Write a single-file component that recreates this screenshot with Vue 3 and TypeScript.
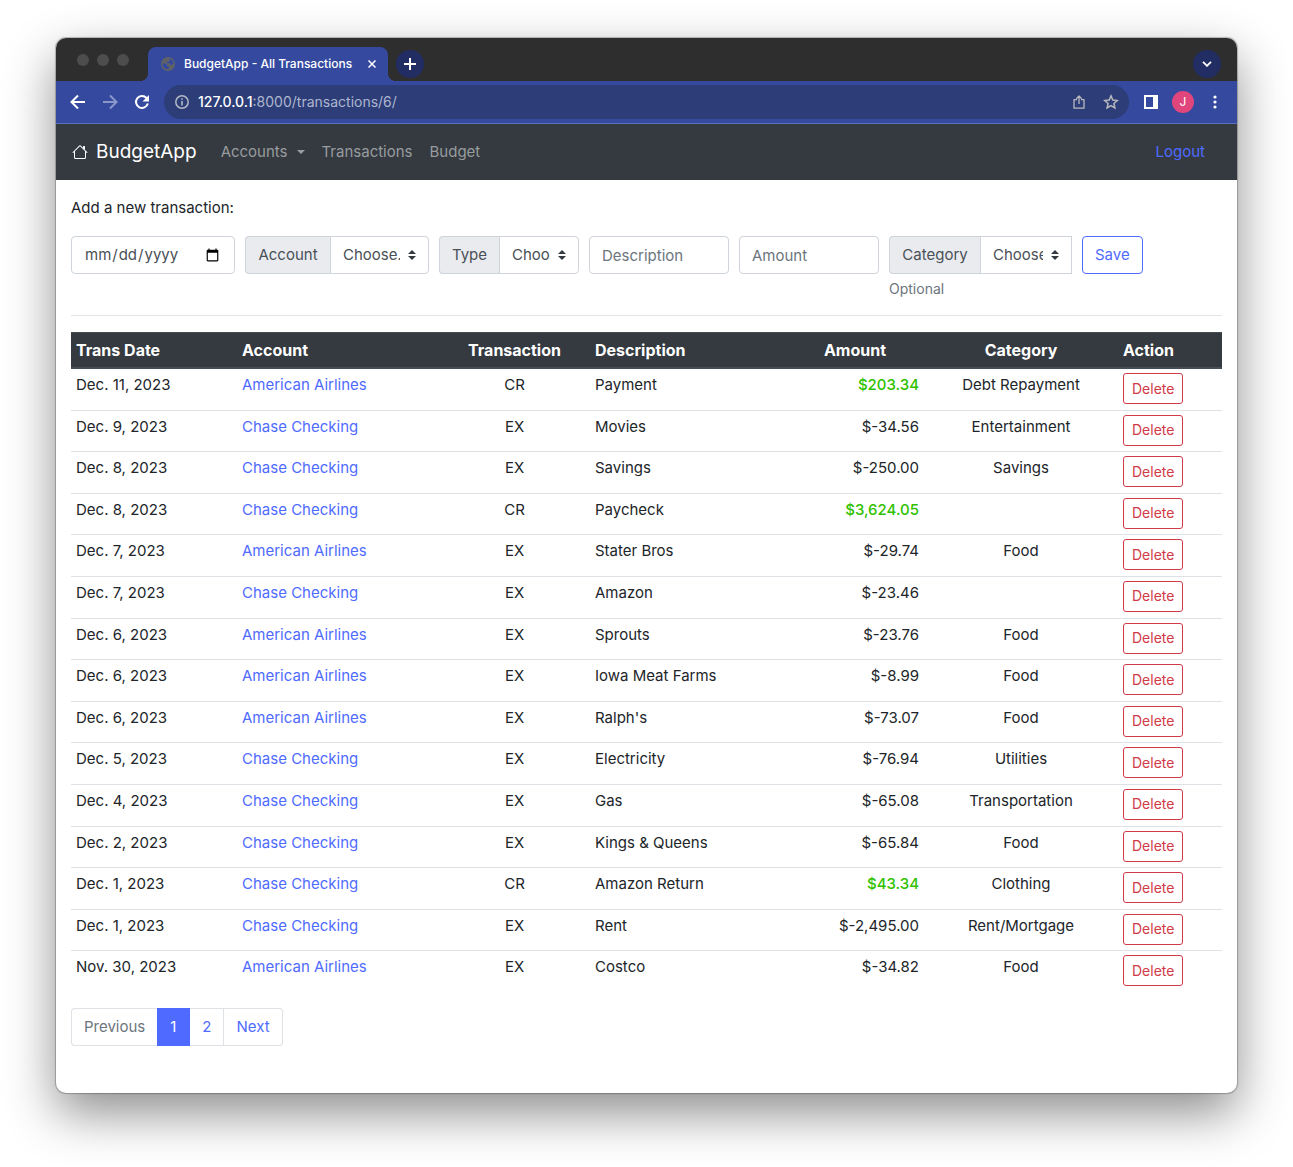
<script setup lang="ts">
interface Transaction {
  date: string
  account: string
  type: string
  description: string
  amount: string
  category: string
}

const chase = 'Chase Checking'
const american = 'American Airlines'

const rows: Transaction[] = [
  { date: 'Dec. 11, 2023', account: american, type: 'CR', description: 'Payment', amount: '$203.34', category: 'Debt Repayment' },
  { date: 'Dec. 9, 2023', account: chase, type: 'EX', description: 'Movies', amount: '$-34.56', category: 'Entertainment' },
  { date: 'Dec. 8, 2023', account: chase, type: 'EX', description: 'Savings', amount: '$-250.00', category: 'Savings' },
  { date: 'Dec. 8, 2023', account: chase, type: 'CR', description: 'Paycheck', amount: '$3,624.05', category: '' },
  { date: 'Dec. 7, 2023', account: american, type: 'EX', description: 'Stater Bros', amount: '$-29.74', category: 'Food' },
  { date: 'Dec. 7, 2023', account: chase, type: 'EX', description: 'Amazon', amount: '$-23.46', category: '' },
  { date: 'Dec. 6, 2023', account: american, type: 'EX', description: 'Sprouts', amount: '$-23.76', category: 'Food' },
  { date: 'Dec. 6, 2023', account: american, type: 'EX', description: 'Iowa Meat Farms', amount: '$-8.99', category: 'Food' },
  { date: 'Dec. 6, 2023', account: american, type: 'EX', description: "Ralph's", amount: '$-73.07', category: 'Food' },
  { date: 'Dec. 5, 2023', account: chase, type: 'EX', description: 'Electricity', amount: '$-76.94', category: 'Utilities' },
  { date: 'Dec. 4, 2023', account: chase, type: 'EX', description: 'Gas', amount: '$-65.08', category: 'Transportation' },
  { date: 'Dec. 2, 2023', account: chase, type: 'EX', description: 'Kings & Queens', amount: '$-65.84', category: 'Food' },
  { date: 'Dec. 1, 2023', account: chase, type: 'CR', description: 'Amazon Return', amount: '$43.34', category: 'Clothing' },
  { date: 'Dec. 1, 2023', account: chase, type: 'EX', description: 'Rent', amount: '$-2,495.00', category: 'Rent/Mortgage' },
  { date: 'Nov. 30, 2023', account: american, type: 'EX', description: 'Costco', amount: '$-34.82', category: 'Food' },
]
</script>

<template>
  <div class="window">
    <header class="tab-strip">
      <div class="lights"><i></i><i></i><i></i></div>
      <div class="tab">
        <svg class="globe" width="14" height="14" viewBox="0 0 14 14">
          <circle cx="7" cy="7" r="7" fill="#5f6368" />
          <path d="M1.500 6.600h2.700c1.300 0 1.900.8 1.900 1.700v.9h1.600v2.900c-3.400.6-6.200-1.900-6.200-5.500zM8.700 1.800c2 .6 3.400 2.200 3.700 4.200-.2 1.100-.9 1.700-1.800 1.700H8.900V6.300H6V4.700h1.500c.6 0 .9-.5.9-1z" fill="#354a9f" />
        </svg>
        <span class="tab-title">BudgetApp - All Transactions</span>
        <button class="tab-close" aria-label="Close tab">
          <svg width="8" height="8" viewBox="0 0 8 8"><path d="M.5.5l7 7M7.500.5l-7 7" stroke="#fff" stroke-width="1.500" /></svg>
        </button>
      </div>
      <button class="round" aria-label="New tab">
        <svg width="12" height="12" viewBox="0 0 12 12"><path d="M6 0v12M0 6h12" stroke="#fff" stroke-width="2" /></svg>
      </button>
      <button class="round tab-search" aria-label="Search tabs">
        <svg width="10" height="6" viewBox="0 0 10 6"><path d="M1 .8l4 4 4-4" fill="none" stroke="#fff" stroke-width="1.800" /></svg>
      </button>
    </header>

    <div class="toolbar">
      <button class="tool" aria-label="Back">
        <svg width="16" height="16" viewBox="0 0 16 16"><path d="M15 8H2M8 1.500L1.500 8 8 14.500" fill="none" stroke="#fff" stroke-width="2" /></svg>
      </button>
      <button class="tool" aria-label="Forward">
        <svg width="16" height="16" viewBox="0 0 16 16"><path d="M1 8h13M8 1.500L14.500 8 8 14.500" fill="none" stroke="#8a97cb" stroke-width="2" /></svg>
      </button>
      <button class="tool" aria-label="Reload">
        <svg width="16" height="16" viewBox="0 0 16 16">
          <path d="M13.800 9.500A6 6 0 1 1 12.500 4L14 5.500" fill="none" stroke="#fff" stroke-width="2" />
          <path d="M15 1v6.500H8.500z" fill="#fff" />
        </svg>
      </button>
      <div class="address">
        <svg width="14" height="14" viewBox="0 0 14 14">
          <circle cx="7" cy="7" r="6.200" fill="none" stroke="#b3b9c6" stroke-width="1.500" />
          <path d="M7 6v4.500M7 3.300v1.500" stroke="#b3b9c6" stroke-width="1.600" />
        </svg>
        <span class="url"><b>127.0.0.1</b>:8000/transactions/6/</span>
        <svg class="share" width="12" height="14" viewBox="0 0 12 14">
          <path d="M4 4.700H1v8.500h10V4.700H8M6 9V1.200M3.300 3.700L6 1l2.700 2.700" fill="none" stroke="#b9b9bd" stroke-width="1.300" stroke-linejoin="round" />
        </svg>
        <svg width="16" height="16" viewBox="0 0 16 16">
          <path d="M8 1.900l1.800 4.200 4.500.4-3.400 3 1 4.400L8 11.600l-3.900 2.300 1-4.400-3.400-3 4.500-.4z" fill="none" stroke="#b9b9bd" stroke-width="1.500" />
        </svg>
      </div>
      <svg class="panel" width="14" height="14" viewBox="0 0 14 14"><path fill-rule="evenodd" d="M0 0h14v14H0zM2 2v10h7V2z" fill="#fff" /></svg>
      <span class="avatar">J</span>
      <svg class="dots" width="4" height="14" viewBox="0 0 4 14" fill="#fff"><circle cx="2" cy="2" r="1.600" /><circle cx="2" cy="7" r="1.600" /><circle cx="2" cy="12" r="1.600" /></svg>
    </div>

    <nav class="navbar">
      <a class="brand" href="#">
        <svg width="16" height="16" viewBox="0 0 16 16" fill="#fff">
          <path fill-rule="evenodd" d="M2 13.500V7h1v6.500a.5.5 0 0 0 .5.5h9a.5.5 0 0 0 .5-.5V7h1v6.500a1.500 1.500 0 0 1-1.500 1.500h-9A1.500 1.500 0 0 1 2 13.500zm11-11V6l-2-2V2.500a.5.5 0 0 1 .5-.5h1a.5.5 0 0 1 .5.5z" />
          <path fill-rule="evenodd" d="M7.293 1.500a1 1 0 0 1 1.414 0l6.647 6.646a.5.5 0 0 1-.708.708L8 2.207 1.354 8.854a.5.5 0 1 1-.708-.708L7.293 1.500z" />
        </svg>
        BudgetApp
      </a>
      <a class="nav-link dropdown" href="#">Accounts</a>
      <a class="nav-link" href="#">Transactions</a>
      <a class="nav-link" href="#">Budget</a>
      <a class="logout" href="#">Logout</a>
    </nav>

    <main class="content">
      <p class="lead">Add a new transaction:</p>
      <form class="entry" @submit.prevent>
        <input class="control date" type="date" aria-label="Date" />
        <div class="group account">
          <label for="account">Account</label>
          <select id="account"><option>Choose...</option></select>
        </div>
        <div class="group type">
          <label for="type">Type</label>
          <select id="type"><option>Choose...</option></select>
        </div>
        <input class="control" type="text" placeholder="Description" aria-label="Description" />
        <input class="control" type="text" placeholder="Amount" aria-label="Amount" />
        <div>
          <div class="group category">
            <label for="category">Category</label>
            <select id="category"><option>Choose...</option></select>
          </div>
          <small>Optional</small>
        </div>
        <button class="save" type="submit">Save</button>
      </form>
      <hr />
      <table>
        <colgroup>
          <col class="c-date" /><col class="c-account" /><col class="c-type" /><col class="c-desc" />
          <col class="c-amount" /><col class="c-category" /><col class="c-action" />
        </colgroup>
        <thead>
          <tr>
            <th>Trans Date</th>
            <th>Account</th>
            <th class="center">Transaction</th>
            <th>Description</th>
            <th class="center">Amount</th>
            <th class="center">Category</th>
            <th>Action</th>
          </tr>
        </thead>
        <tbody>
          <tr v-for="(row, i) in rows" :key="i">
            <td>{{ row.date }}</td>
            <td><a href="#">{{ row.account }}</a></td>
            <td class="center">{{ row.type }}</td>
            <td>{{ row.description }}</td>
            <td class="amount" :class="{ credit: row.type === 'CR' }">{{ row.amount }}</td>
            <td class="center">{{ row.category }}</td>
            <td><button class="delete" type="button">Delete</button></td>
          </tr>
        </tbody>
      </table>
      <ul class="pagination">
        <li class="disabled"><a href="#">Previous</a></li>
        <li class="active"><a href="#">1</a></li>
        <li><a href="#">2</a></li>
        <li><a href="#">Next</a></li>
      </ul>
    </main>
  </div>
</template>

<style>
body {
  margin: 0;
  background: #fff;
}
#app {
  display: flow-root;
}
</style>

<style scoped>
* {
  box-sizing: border-box;
}
.window {
  margin: 38px 56px 74px;
  border-radius: 10px;
  background: #fff;
  color: #212529;
  font: 15px/24px Inter, "Liberation Sans", sans-serif;
  box-shadow: 0 0 1px 1px rgba(0, 0, 0, 0.25), 0 20px 50px rgba(0, 0, 0, 0.45);
}
button {
  padding: 0;
  border: 0;
  background: none;
  font: inherit;
}
a {
  color: #4f6bff;
  text-decoration: none;
}
svg {
  display: block;
  flex: none;
}

/* Browser chrome */
.tab-strip {
  display: flex;
  align-items: center;
  height: 43px;
  padding: 9px 16px 0 21px;
  border-radius: 10px 10px 0 0;
  background: #2e2e2e;
}
.lights {
  display: flex;
  gap: 8px;
  margin-right: 19px;
  padding-bottom: 8px;
}
.lights i {
  width: 12px;
  height: 12px;
  border-radius: 50%;
  background: #4d4d4d;
}
.tab {
  position: relative;
  display: flex;
  align-items: center;
  width: 240px;
  height: 34px;
  padding: 0 12px 0 13px;
  border-radius: 8px 8px 0 0;
  background: #354a9f;
  color: #fff;
  font-size: 12px;
  font-weight: 500;
}
.tab::before,
.tab::after {
  content: "";
  position: absolute;
  bottom: 0;
  width: 8px;
  height: 8px;
}
.tab::before {
  right: 100%;
  background: radial-gradient(circle at 0 0, transparent 8px, #354a9f 8px);
}
.tab::after {
  left: 100%;
  background: radial-gradient(circle at 100% 0, transparent 8px, #354a9f 8px);
}
.tab-title {
  flex: 1;
  margin-left: 9px;
  white-space: nowrap;
}
.tab-close {
  display: grid;
  place-items: center;
  width: 8px;
  height: 16px;
}
.round {
  display: grid;
  place-items: center;
  width: 28px;
  height: 28px;
  margin-left: 8px;
  border-radius: 50%;
  background: #212d63;
}
.tab-search {
  margin-left: auto;
}
.toolbar {
  display: flex;
  align-items: center;
  height: 43px;
  padding: 0 20px 0 14px;
  border-bottom: 1px solid #5a72bd;
  background: #354a9f;
}
.tool {
  margin-right: 16px;
}
.address {
  display: flex;
  flex: 1;
  align-items: center;
  height: 34px;
  margin-right: 15px;
  margin-left: -2px;
  padding: 0 10px 0 11px;
  border-radius: 17px;
  background: #2c3d77;
}
.url {
  flex: 1;
  margin-left: 9px;
  color: #aeb6cf;
  font-size: 14px;
}
.url b {
  color: #fff;
  font-weight: 500;
}
.share {
  margin-right: 18px;
}
.avatar {
  width: 22px;
  margin: 0 19px 0 14px;
  border-radius: 50%;
  background: #e0467c;
  color: #fff;
  font-size: 12px;
  line-height: 22px;
  text-align: center;
}

/* Application navigation */
.navbar {
  display: flex;
  align-items: center;
  gap: 17px;
  height: 56px;
  padding: 0 32px 0 16px;
  background: #343a40;
}
.brand {
  display: flex;
  align-items: center;
  gap: 8px;
  margin-right: 7px;
  color: #fff;
  font-size: 19px;
}
.nav-link {
  color: #999c9f;
}
.dropdown {
  display: flex;
  align-items: center;
  gap: 9px;
}
.dropdown::after {
  content: "";
  border: 4px solid transparent;
  border-top-color: currentColor;
  border-bottom: 0;
}
.logout {
  margin-left: auto;
}

/* Entry form */
.content {
  padding: 16px 15px 47px;
}
.lead {
  margin: 0 0 16px;
}
.entry {
  display: flex;
  flex-wrap: wrap;
  align-items: flex-start;
  gap: 10px;
}
.control,
select {
  height: 38px;
  border: 1px solid #ced4da;
  border-radius: 4px;
  background: #fff;
  color: #495057;
  font: inherit;
}
.control {
  width: 140px;
  padding: 6px 12px;
}
.control::placeholder {
  color: #6c757d;
}
.date {
  width: 164px;
}
.group {
  display: flex;
}
.group label {
  flex: none;
  height: 38px;
  padding: 6px 0;
  border: 1px solid #ced4da;
  border-right: 0;
  border-radius: 4px 0 0 4px;
  background: #e9ebef;
  color: #495057;
  text-align: center;
}
select {
  flex: 1;
  min-width: 0;
  padding: 6px 28px 6px 12px;
  border-radius: 0 4px 4px 0;
  appearance: none;
  background: #fff url("data:image/svg+xml,%3csvg xmlns='http://www.w3.org/2000/svg' width='4' height='5' viewBox='0 0 4 5'%3e%3cpath fill='%23343a40' d='M2 0L0 2h4zm0 5L0 3h4z'/%3e%3c/svg%3e") no-repeat right 12px center / 8px 10px;
}
.account {
  width: 184px;
}
.account label {
  width: 85px;
}
.type {
  width: 140px;
}
.type label {
  width: 60px;
}
.category {
  width: 183px;
}
.category label {
  width: 91px;
}
.category select {
  border-radius: 0;
}
small {
  display: block;
  margin-top: 4px;
  color: #6c757d;
  font-size: 14px;
  line-height: 21px;
}
.save {
  height: 38px;
  padding: 0 12px;
  border: 1px solid #4f6bff;
  border-radius: 4px;
  color: #4f6bff;
}
hr {
  margin: 16px 0;
  border: 0;
  border-top: 1px solid #e3e4e6;
}

/* Transaction list */
table {
  width: 100%;
  height: 660px;
  table-layout: fixed;
  border-spacing: 0;
}
.c-date {
  width: 166px;
}
.c-account {
  width: 202px;
}
.c-type {
  width: 151px;
}
.c-desc {
  width: 196px;
}
.c-amount {
  width: 138px;
}
.c-category {
  width: 194px;
}
.c-action {
  width: 104px;
}
th {
  height: 37px;
  padding: 5px;
  border-top: 1px solid #454d55;
  border-bottom: 2px solid #454d55;
  background: #343a40;
  color: #fff;
  font-size: 16px;
  font-weight: 700;
  text-align: left;
}
td {
  padding: 4px 5px 5px;
  border-bottom: 1px solid #dee2e6;
  vertical-align: top;
}
tbody tr:last-child td {
  border-bottom: 0;
}
.center {
  text-align: center;
}
.amount {
  text-align: right;
}
.credit {
  color: #30c200;
  font-weight: 500;
}
.delete {
  display: block;
  height: 31px;
  padding: 0 8px;
  border: 1px solid #d13a47;
  border-radius: 3px;
  color: #d13a47;
  font-size: 14px;
}

/* Pager */
.pagination {
  display: flex;
  margin: 16px 0 0;
  padding: 0;
  list-style: none;
}
.pagination a {
  display: block;
  min-width: 33px;
  height: 38px;
  padding: 6px 12px;
  border: 1px solid #dee2e6;
  border-left-width: 0;
  text-align: center;
}
.pagination li:first-child a {
  border-left-width: 1px;
  border-radius: 4px 0 0 4px;
}
.pagination li:last-child a {
  border-radius: 0 4px 4px 0;
}
.pagination .disabled a {
  border-right-width: 0;
  color: #6c757d;
}
.pagination .active a {
  border-color: #4f6bff;
  background: #4f6bff;
  color: #fff;
}
</style>
